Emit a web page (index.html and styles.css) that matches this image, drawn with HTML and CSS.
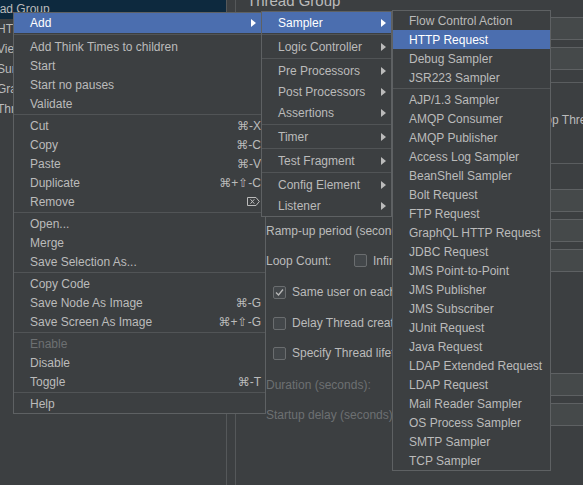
FILE: index.html
```html
<!DOCTYPE html>
<html>
<head>
<meta charset="utf-8">
<link rel="stylesheet" href="styles.css">
</head>
<body>
<div class="app">
  <div class="tree">
    <div class="tree-row sel"><span class="tree-text parent">Thread Group</span></div>
    <div class="tree-row"><span class="tree-text">HTTP Request</span></div>
    <div class="tree-row"><span class="tree-text">View Results Tree</span></div>
    <div class="tree-row"><span class="tree-text">Summary Report</span></div>
    <div class="tree-row"><span class="tree-text">Graph Results</span></div>
    <div class="tree-row"><span class="tree-text">Thread Group</span></div>
  </div>
  <div class="splitter"></div>
  <div class="editor">
    <div class="title">Thread Group</div>
    <div class="field-row"><div class="label-cell short">Name:</div><div class="input"></div></div>
    <div class="field-row"><div class="label-cell short">Comments:</div><div class="input"></div></div>
    <div class="fieldset">
      <div class="radio-row">Stop Thread</div>
    </div>
    <div class="field-row"><div class="label-cell">Number of Threads (users):</div><div class="input"></div></div>
    <div class="field-row"><div class="label-cell">Ramp-up period (seconds):</div><div class="input"></div></div>
    <div class="field-row">
      <div class="label-cell"><span class="loop-label">Loop Count:</span><span class="cb"></span><span class="cb-text">Infinite</span></div>
      <div class="input"></div>
    </div>
    <div class="check-row first"><span class="cb"><svg width="11" height="11" viewBox="0 0 11 11"><path d="M2 5.5 L4.5 8 L9 2.5" fill="none" stroke="#b8b8b8" stroke-width="1.3"/></svg></span><span class="cb-text">Same user on each iteration</span></div>
    <div class="check-row second"><span class="cb"></span><span class="cb-text">Delay Thread creation until needed</span></div>
    <div class="check-row third"><span class="cb"></span><span class="cb-text">Specify Thread lifetime</span></div>
    <div class="field-row duration"><div class="label-cell disabled">Duration (seconds):</div><div class="input"></div></div>
    <div class="field-row startup"><div class="label-cell disabled">Startup delay (seconds):</div><div class="input"></div></div>
  </div>

  <div class="menu main">
    <div class="item hl first">Add<span class="arrow main-arrow"></span></div>
    <div class="sep tall"></div>
    <div class="item">Add Think Times to children</div>
    <div class="item">Start</div>
    <div class="item">Start no pauses</div>
    <div class="item">Validate</div>
    <div class="sep"></div>
    <div class="item">Cut<span class="key">⌘-X</span></div>
    <div class="item">Copy<span class="key">⌘-C</span></div>
    <div class="item">Paste<span class="key">⌘-V</span></div>
    <div class="item">Duplicate<span class="key">⌘+⇧-C</span></div>
    <div class="item">Remove<span class="key del"><svg width="13" height="9" viewBox="0 0 13 9"><path d="M0.5 0.5 H9 L12.3 4.5 L9 8.5 H0.5 Z M3.5 2.3 L7.3 6.7 M7.3 2.3 L3.5 6.7" fill="none" stroke="#bbbbbb" stroke-width="1"/></svg></span></div>
    <div class="sep"></div>
    <div class="item">Open...</div>
    <div class="item">Merge</div>
    <div class="item">Save Selection As...</div>
    <div class="sep"></div>
    <div class="item">Copy Code</div>
    <div class="item">Save Node As Image<span class="key">⌘-G</span></div>
    <div class="item">Save Screen As Image<span class="key">⌘+⇧-G</span></div>
    <div class="sep"></div>
    <div class="item disabled">Enable</div>
    <div class="item">Disable</div>
    <div class="item">Toggle<span class="key">⌘-T</span></div>
    <div class="sep"></div>
    <div class="item">Help</div>
  </div>

  <div class="menu sub1">
    <div class="item hl">Sampler<span class="arrow"></span></div>
    <div class="sep"></div>
    <div class="item">Logic Controller<span class="arrow"></span></div>
    <div class="sep"></div>
    <div class="item">Pre Processors<span class="arrow"></span></div>
    <div class="item">Post Processors<span class="arrow"></span></div>
    <div class="item">Assertions<span class="arrow"></span></div>
    <div class="sep"></div>
    <div class="item">Timer<span class="arrow"></span></div>
    <div class="sep"></div>
    <div class="item">Test Fragment<span class="arrow"></span></div>
    <div class="sep"></div>
    <div class="item">Config Element<span class="arrow"></span></div>
    <div class="item">Listener<span class="arrow"></span></div>
  </div>

  <div class="menu sub2">
    <div class="item">Flow Control Action</div>
    <div class="item hl">HTTP Request</div>
    <div class="item">Debug Sampler</div>
    <div class="item">JSR223 Sampler</div>
    <div class="sep"></div>
    <div class="item">AJP/1.3 Sampler</div>
    <div class="item">AMQP Consumer</div>
    <div class="item">AMQP Publisher</div>
    <div class="item">Access Log Sampler</div>
    <div class="item">BeanShell Sampler</div>
    <div class="item">Bolt Request</div>
    <div class="item">FTP Request</div>
    <div class="item">GraphQL HTTP Request</div>
    <div class="item">JDBC Request</div>
    <div class="item">JMS Point-to-Point</div>
    <div class="item">JMS Publisher</div>
    <div class="item">JMS Subscriber</div>
    <div class="item">JUnit Request</div>
    <div class="item">Java Request</div>
    <div class="item">LDAP Extended Request</div>
    <div class="item">LDAP Request</div>
    <div class="item">Mail Reader Sampler</div>
    <div class="item">OS Process Sampler</div>
    <div class="item">SMTP Sampler</div>
    <div class="item">TCP Sampler</div>
  </div>
</div>
</body>
</html>
```

FILE: styles.css
```css
* { box-sizing: border-box; }

body {
  margin: 0;
  background: #3c3f41;
  font-family: "Liberation Sans", Arial, "DejaVu Sans", sans-serif;
  font-size: 12px;
  color: #bbbbbb;
}

.app {
  position: relative;
  width: 583px;
  height: 485px;
  overflow: hidden;
  display: flex;
  background: #3c3f41;
}

/* ---------- tree ---------- */
.tree {
  width: 227px;
  flex: none;
  border-right: 1px solid #55585a;
  overflow: hidden;
}
.tree-row {
  height: 20px;
  line-height: 20px;
  white-space: nowrap;
}
.tree-row.sel {
  margin-top: -1px;
  background: #0d293e;
}
.tree-text { display: inline-block; margin-left: -3px; }
.tree-text.parent { margin-left: -25px; }

.splitter { width: 8px; flex: none; }

/* ---------- editor ---------- */
.editor {
  flex: 1;
  min-width: 0;
  border-left: 1px solid #55585a;
  display: flex;
  flex-direction: column;
}
.title {
  margin-top: -8px;
  padding-left: 11px;
  height: 18px;
  line-height: 18px;
  font-size: 15px;
  white-space: nowrap;
}
.field-row {
  display: flex;
  align-items: center;
  height: 23px;
  margin-top: 7px;
  padding-left: 30px;
  white-space: nowrap;
}
.label-cell {
  width: 170px;
  flex: none;
  display: flex;
  align-items: center;
}
.label-cell.short { width: 100px; }
.label-cell.disabled { color: #6d7072; }
.loop-label { width: 88px; flex: none; }
.input {
  flex: 1;
  height: 23px;
  margin-right: -12px;
  border: 1px solid #5e6163;
  background: #45494a;
}
.fieldset {
  margin-top: 12px;
  margin-left: 14px;
  margin-right: -12px;
  height: 82px;
  border-top: 1px solid #5a5d5f;
  border-bottom: 1px solid #5a5d5f;
  padding-top: 29px;
  padding-left: 284px;
}
.radio-row {
  line-height: 16px;
  white-space: nowrap;
}
.field-row.duration { margin-top: 10px; }
.field-row.startup { margin-top: 7px; }
.fieldset + .field-row { margin-top: 25px; }

.check-row {
  display: flex;
  align-items: center;
  height: 20px;
  padding-left: 37px;
  white-space: nowrap;
}
.check-row.first { margin-top: 10px; }
.check-row.second { margin-top: 11px; }
.check-row.third { margin-top: 10px; }

.cb {
  width: 13px;
  height: 13px;
  flex: none;
  border: 1px solid #6a6d6f;
  border-radius: 2px;
  background: #43474a;
  display: flex;
  align-items: center;
  justify-content: center;
}
.cb-text { margin-left: 6px; }

/* ---------- menus ---------- */
.menu {
  position: absolute;
  background: #3c3f41;
  border: 1px solid #5e6163;
}
.menu.main { left: 13px; top: 12px; width: 253px; }
.menu.sub1 { left: 261px; top: 11px; width: 131px; }
.menu.sub2 { left: 392px; top: 10px; width: 159px; }

.item {
  height: 19px;
  display: flex;
  align-items: center;
  padding-left: 16px;
  padding-right: 4px;
  white-space: nowrap;
  color: #bbbbbb;
}
.item.first { height: 20px; }
.sub1 .item { height: 21px; padding-right: 5px; }
.item.hl { background: #4b6eaf; color: #ffffff; }
.item.disabled { color: #6d7072; }

.sep { height: 3px; padding-top: 1px; }
.sep.tall { height: 4px; }
.sep::before {
  content: "";
  display: block;
  height: 1px;
  background: #515456;
}

.key { margin-left: auto; }
.key.del { display: flex; margin-right: 1px; }

.arrow {
  margin-left: auto;
  width: 0;
  height: 0;
  border-left: 5px solid currentColor;
  border-top: 4px solid transparent;
  border-bottom: 4px solid transparent;
}
.main-arrow { margin-right: 5px; }
```
